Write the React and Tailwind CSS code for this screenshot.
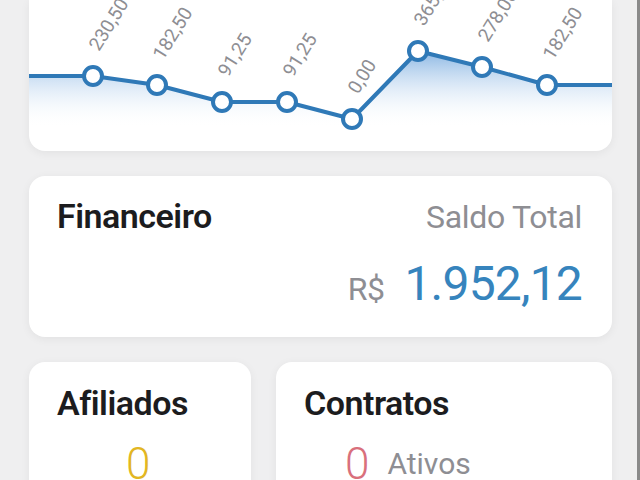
import React from 'react';

const points = [
  { x: 64, y: 76, label: '230,50' },
  { x: 128, y: 85, label: '182,50' },
  { x: 193, y: 102, label: '91,25' },
  { x: 258, y: 102, label: '91,25' },
  { x: 323, y: 119, label: '0,00' },
  { x: 389, y: 51, label: '365,00' },
  { x: 453, y: 67, label: '278,00' },
  { x: 518, y: 85, label: '182,50' },
];

const Chart = () => {
  const line = [{ x: 0, y: 76 }, ...points, { x: 583, y: 85 }];
  const d = line.map((p, i) => `${i === 0 ? 'M' : 'L'}${p.x} ${p.y}`).join(' ');
  const area = `${d} L583 151 L0 151 Z`;

  return (
    <svg width="583" height="151" viewBox="0 0 583 151" className="block">
      <defs>
        <linearGradient id="fade" x1="0" y1="45" x2="0" y2="128" gradientUnits="userSpaceOnUse">
          <stop offset="0" stopColor="#3d86d1" stopOpacity="0.7" />
          <stop offset="1" stopColor="#ffffff" stopOpacity="0" />
        </linearGradient>
      </defs>
      <path d={area} fill="url(#fade)" />
      <path d={d} fill="none" stroke="#2f79b7" strokeWidth="4" strokeLinejoin="round" />
      {points.map((p, i) => (
        <g key={i}>
          <circle cx={p.x} cy={p.y} r="9" fill="#ffffff" stroke="#2f79b7" strokeWidth="4" />
          <text
            x={p.x + 6}
            y={p.y - 24}
            fill="#8e8e93"
            fontSize="19"
            fontFamily="Roboto, 'Liberation Sans', sans-serif"
            transform={`rotate(-58 ${p.x + 6} ${p.y - 24})`}
          >
            {p.label}
          </text>
        </g>
      ))}
    </svg>
  );
};

const App = () => {
  return (
    <div className="w-[640px] h-[480px] overflow-hidden bg-[#efeff0] border-r-[3px] border-[#8a8a8a] font-['Roboto','Liberation_Sans',sans-serif]">
      <div className="pl-[29px] pr-[25px] flex flex-col gap-[25px]">
        {/* Chart */}
        <div className="w-[583px] bg-white rounded-b-[16px] shadow-[0_2px_10px_rgba(0,0,0,0.06)] overflow-hidden">
          <Chart />
        </div>

        {/* Financeiro */}
        <div className="w-[583px] h-[161px] bg-white rounded-[16px] shadow-[0_2px_10px_rgba(0,0,0,0.06)] pl-[28px] pr-[30px] pt-[20px]">
          <div className="flex justify-between items-baseline leading-[40px]">
            <span className="text-[34px] font-semibold text-[#1c1c1e] tracking-[-0.5px]">Financeiro</span>
            <span className="text-[32px] text-[#8e8e93] tracking-[-0.3px]">Saldo Total</span>
          </div>
          <div className="flex justify-end items-baseline gap-[20px] mt-[19px] leading-[56px]">
            <span className="text-[32px] text-[#8e8e93] tracking-[-0.5px]">R$</span>
            <span className="text-[48px] text-[#3684bd] tracking-[-0.8px]">1.952,12</span>
          </div>
        </div>

        {/* Bottom row */}
        <div className="flex gap-[25px] w-[583px]">
          <div className="w-[222px] h-[160px] bg-white rounded-[16px] shadow-[0_2px_10px_rgba(0,0,0,0.06)] pl-[28px] pt-[21px]">
            <div className="text-[34px] leading-[40px] font-semibold text-[#1c1c1e] tracking-[-0.5px]">Afiliados</div>
            <div className="pl-[69px] mt-[15px] text-[44px] leading-[52px] font-light text-[#e2b623]">0</div>
          </div>
          <div className="w-[336px] h-[160px] bg-white rounded-[16px] shadow-[0_2px_10px_rgba(0,0,0,0.06)] pl-[28px] pt-[21px]">
            <div className="text-[34px] leading-[40px] font-semibold text-[#1c1c1e] tracking-[-0.5px]">Contratos</div>
            <div className="pl-[41px] mt-[15px] flex items-center gap-[18px] leading-[52px]">
              <span className="text-[44px] font-light text-[#d9707c]">0</span>
              <span className="text-[30px] text-[#8e8e93]">Ativos</span>
            </div>
          </div>
        </div>
      </div>
    </div>
  );
};

export default App;
